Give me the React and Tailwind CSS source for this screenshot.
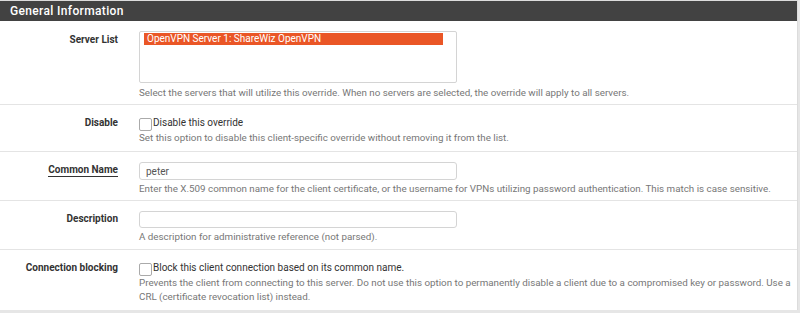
import React from "react";

const font = { fontFamily: "Roboto, 'Liberation Sans', sans-serif" };

function Row({ label, underline, children, help }) {
  return (
    <div className="flex border-t border-[#e4e4e4] pt-[9px]">
      <div className="w-[118px] shrink-0 pt-[1px] text-right text-[10px] font-bold leading-[16px] text-[#333]">
        <span className={underline ? "border-b border-[#333] pb-[1px]" : ""}>{label}</span>
      </div>
      <div className="ml-[21px] flex-1 pr-[4px]">
        {children}
        {help}
      </div>
    </div>
  );
}

function Help({ children, className = "" }) {
  return <div className={"text-[9.8px] leading-[14px] text-[#777] " + className}>{children}</div>;
}

function Check({ text }) {
  return (
    <label className="flex h-[16px] items-center text-[10px] text-[#333]">
      <span className="mt-[4px] h-[13px] w-[13px] shrink-0 rounded-[2px] border border-[#aaa] bg-white" />
      <span className="ml-[1px]">{text}</span>
    </label>
  );
}

export default function App() {
  return (
    <div className="h-[313px] w-[800px] overflow-hidden bg-[#e6e6e6]" style={font}>
      <div className="h-[310px] w-[798px] border-r border-t border-[#dcdcdc] bg-white">
        <div className="flex h-[20px] items-center bg-[#424242] pl-[10px] text-[12px] font-medium tracking-[0.35px] text-white">
          General Information
        </div>

        <div className="flex pt-[10px]">
          <div className="w-[118px] shrink-0 pt-[1px] text-right text-[10px] font-bold leading-[16px] text-[#333]">
            Server List
          </div>
          <div className="ml-[21px] flex-1">
            <div className="h-[52px] w-[318px] rounded-[2px] border border-[#d4d4d4] bg-white px-[4px] pt-[1px]">
              <div className="h-[12px] w-[299px] bg-[#ea5626] pl-[3px] text-[10px] leading-[12px] text-white">
                OpenVPN Server 1: ShareWiz OpenVPN
              </div>
            </div>
            <Help className="mt-[3px] pb-[4px]">
              Select the servers that will utilize this override. When no servers are selected, the override will apply to all servers.
            </Help>
          </div>
        </div>

        <Row
          label="Disable"
          help={<Help className="mt-[1px] pb-[6px]">Set this option to disable this client-specific override without removing it from the list.</Help>}
        >
          <Check text="Disable this override" />
        </Row>

        <Row
          label="Common Name"
          underline
          help={
            <Help className="mt-[2px] pb-[4px]">
              Enter the X.509 common name for the client certificate, or the username for VPNs utilizing password authentication. This match is case sensitive.
            </Help>
          }
        >
          <div className="mt-[1px] flex h-[18px] w-[318px] items-center rounded-[3px] border border-[#d4d4d4] px-[6px] text-[10px] text-[#555]">
            peter
          </div>
        </Row>

        <Row
          label="Description"
          help={<Help className="mt-[2px] pb-[5px]">A description for administrative reference (not parsed).</Help>}
        >
          <div className="mt-[1px] h-[17px] w-[318px] rounded-[3px] border border-[#d4d4d4]" />
        </Row>

        <Row
          label="Connection blocking"
          help={
            <Help className="mt-[1px] pb-[6px]">
              Prevents the client from connecting to this server. Do not use this option to permanently disable a client due to a compromised key or password. Use a CRL (certificate revocation list) instead.
            </Help>
          }
        >
          <Check text="Block this client connection based on its common name." />
        </Row>
      </div>
    </div>
  );
}
